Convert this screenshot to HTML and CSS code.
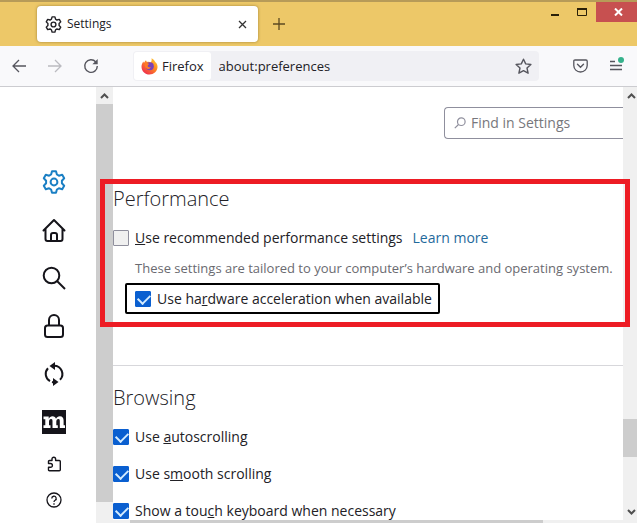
FILE: index.html
```html
<!DOCTYPE html>
<html lang="en">
<head>
    <meta charset="UTF-8">
    <meta name="viewport" content="width=device-width, initial-scale=1.0">
    <title>Settings</title>
    <link rel="stylesheet" href="styles.css">
</head>
<body>
    <svg class="defs" width="0" height="0" aria-hidden="true">
        <symbol id="gear" viewBox="0 0 24 24">
            <path d="M10 1.2h4l.9 3.3 2 1.2 3.3-.9 2 3.5-2.3 2.4v2.6l2.3 2.4-2 3.5-3.3-.9-2 1.2-.9 3.3h-4l-.9-3.3-2-1.2-3.3.9-2-3.5 2.3-2.4v-2.6L1.800 8.300l2-3.500 3.300.9 2-1.200z" fill="none" stroke="currentColor" stroke-width="2" stroke-linejoin="round"/>
            <circle cx="12" cy="12" r="3.400" fill="none" stroke="currentColor" stroke-width="2"/>
        </symbol>
    </svg>

    <div class="window">
        <header class="titlebar">
            <div class="tab">
                <svg class="tab-icon" width="17" height="17"><use href="#gear"/></svg>
                <span class="tab-title">Settings</span>
                <button class="icon-btn tab-close" aria-label="Close tab">
                    <svg width="9" height="9" viewBox="0 0 9 9"><path d="M1 1l7 7M8 1L1 8" stroke="#333" stroke-width="1.300"/></svg>
                </button>
            </div>
            <button class="icon-btn new-tab" aria-label="New tab">
                <svg width="12" height="12" viewBox="0 0 12 12"><path d="M6 0v12M0 6h12" stroke="#5c4a20" stroke-width="1.300"/></svg>
            </button>
            <div class="controls">
                <button class="icon-btn control" aria-label="Minimize">
                    <svg width="10" height="10" viewBox="0 0 10 10"><path d="M1 7h8v2H1z" fill="#2a2008"/></svg>
                </button>
                <button class="icon-btn control" aria-label="Maximize">
                    <svg width="10" height="10" viewBox="0 0 10 10"><path d="M.500 1.500h9v7h-9z" fill="none" stroke="#2a2008"/><path d="M0 1h10v2H0z" fill="#2a2008"/></svg>
                </button>
                <button class="icon-btn control control-close" aria-label="Close">
                    <svg width="9" height="8" viewBox="0 0 9 8"><path d="M1 .500l7 7M8 .500l-7 7" stroke="#fff" stroke-width="2"/></svg>
                </button>
            </div>
        </header>

        <div class="toolbar">
            <div class="history">
                <button class="icon-btn nav-btn" aria-label="Back">
                    <svg width="14" height="14" viewBox="0 0 14 14"><path d="M14 7H1M7 1L1 7l6 6" fill="none" stroke="#56565e" stroke-width="1.300"/></svg>
                </button>
                <button class="icon-btn nav-btn" aria-label="Forward" disabled>
                    <svg width="14" height="14" viewBox="0 0 14 14"><path d="M0 7h13M7 1l6 6-6 6" fill="none" stroke="#bbbbc0" stroke-width="1.300"/></svg>
                </button>
                <button class="icon-btn nav-btn" aria-label="Reload">
                    <svg width="16" height="16" viewBox="0 0 16 16"><path d="M12.800 4A6.300 6.300 0 1 0 14.300 8" fill="none" stroke="#56565e" stroke-width="1.400"/><path d="M14.700 1v5.300H9.400z" fill="#56565e"/></svg>
                </button>
            </div>
            <div class="urlbar">
                <button class="identity">
                    <svg width="17" height="17" viewBox="0 0 17 17">
                        <defs>
                            <linearGradient id="flame" x1="1" y1="0" x2="0.200" y2="1">
                                <stop offset="0" stop-color="#ffd83c"/>
                                <stop offset="0.450" stop-color="#ff8a20"/>
                                <stop offset="1" stop-color="#ee2850"/>
                            </linearGradient>
                        </defs>
                        <path d="M10.500.300c2 1 3.200 2.300 3.700 3.800 1.700 1.300 2.600 3.300 2.300 5.500-.4 4-3.800 7-8 7-4.500 0-8-3.400-8-7.800 0-2.200.8-4 2-5.400l.4 1.500C3.700 3.600 4.400 2.700 5 2.200c.1.700.5 1.300 1 1.700 1.200-.4 2.800-.2 3.800.5.900-1.200 1-2.700.700-4.100z" fill="url(#flame)"/>
                        <circle cx="8.800" cy="8.200" r="4" fill="#7b42b8"/>
                        <path d="M3.700 5.500c2-.8 3.400-.5 4.300.4-.2.900-1.400 1.100-1.400 2 .5 1.300 2 1.700 3.400 1-.8 2-3 2.700-4.700 1.400C4 9.300 3.400 7.500 3.700 5.500z" fill="#ff7a25"/>
                    </svg>
                    <span>Firefox</span>
                </button>
                <input class="url" type="text" value="about:preferences" aria-label="Address">
                <button class="icon-btn star" aria-label="Bookmark this page">
                    <svg width="17" height="17" viewBox="0 0 17 17"><path d="M8.500 1.200l2.200 4.700 5.200.6-3.900 3.500 1.100 5.200-4.600-2.600-4.600 2.600L5 10 1.100 6.500l5.200-.6z" fill="none" stroke="#56565e" stroke-width="1.400" stroke-linejoin="round"/></svg>
                </button>
            </div>
            <div class="actions">
                <button class="icon-btn action" aria-label="Save to Pocket">
                    <svg width="15" height="14" viewBox="0 0 15 14"><path d="M2 1h11q1.200 0 1.200 1.200V6.500a6.700 6.500 0 0 1-13.400 0V2.200Q.8 1 2 1z" fill="none" stroke="#56565e" stroke-width="1.300"/><path d="M4.500 5.300l3 2.900 3-2.900" fill="none" stroke="#56565e" stroke-width="1.400" stroke-linecap="round"/></svg>
                </button>
                <button class="icon-btn action" aria-label="Open application menu">
                    <svg width="16" height="18" viewBox="0 0 16 18"><path d="M2 4.500h5M2 8.500h12M2 12.500h12" stroke="#56565e" stroke-width="1.300"/><circle cx="13" cy="3" r="3" fill="#36b28c"/></svg>
                </button>
            </div>
        </div>

        <div class="content">
            <nav class="sidebar">
                <a class="category selected" href="#general" aria-label="General">
                    <svg width="24" height="24"><use href="#gear"/></svg>
                </a>
                <a class="category" href="#home" aria-label="Home">
                    <svg width="24" height="24" viewBox="0 0 24 24" fill="none" stroke="currentColor" stroke-width="2" stroke-linejoin="round" stroke-linecap="round"><path d="M1.500 12.500L12 2l10.500 10.500M3.500 11v10q0 2 2 2h13q2 0 2-2V11"/><path d="M9 23v-6q0-2 2-2h2q2 0 2 2v6"/></svg>
                </a>
                <a class="category" href="#search" aria-label="Search">
                    <svg width="24" height="24" viewBox="0 0 24 24" fill="none" stroke="currentColor" stroke-width="2"><circle cx="9.500" cy="9.500" r="7.800"/><path d="M15 15l8 8"/></svg>
                </a>
                <a class="category" href="#privacy" aria-label="Privacy &amp; Security">
                    <svg width="24" height="24" viewBox="0 0 24 24" fill="none" stroke="currentColor" stroke-width="2"><rect x="3" y="11.500" width="18" height="11.500" rx="2.500"/><path d="M7 11.500V6a5 5 0 0 1 10 0v5.500"/></svg>
                </a>
                <a class="category" href="#sync" aria-label="Sync">
                    <svg width="24" height="24" viewBox="0 0 24 24" fill="none" stroke="currentColor" stroke-width="2"><path d="M8 19.200A8.300 8.300 0 0 1 6 6.200M12 3.700A8.300 8.300 0 0 1 18 17.800M12 20.300a8.300 8.300 0 0 1-2-.2"/><path d="M13 0v8L7.500 4zM11 16v8l5.500-4z" fill="currentColor" stroke="none"/></svg>
                </a>
                <a class="category" href="#more" aria-label="More from Mozilla">
                    <svg width="24" height="24" viewBox="0 0 24 24"><path d="M0 0h24v24H0z" fill="#15141a"/><path d="M1.500 6.500h5.200v2.200C7.500 7.200 8.700 6.200 10.500 6.200c1.900 0 3 .9 3.500 2.500.8-1.600 2-2.500 3.800-2.500 2.700 0 3.800 1.700 3.800 4.300v4.700H23V18h-5.200v-6.700c0-1.500-.3-2.300-1.400-2.300-1.400 0-2.100 1.300-2.100 3v3.200h1.500V18H10.500v-6.700c0-1.500-.3-2.300-1.400-2.300C7.700 9 7 10.300 7 12v3.200h1.500V18h-7v-2.800h1.800V9.300H1.500z" fill="#fff"/></svg>
                </a>
                <a class="category small" href="#addons" aria-label="Extensions &amp; Themes">
                    <svg width="16" height="16" viewBox="0 0 16 16" fill="none" stroke="currentColor" stroke-width="1.400" stroke-linejoin="round"><path d="M2.500 7.500V5.500q0-1 1-1H6V3a1.800 1.800 0 0 1 3.600 0v1.500h3.700q1 0 1 1v8.300q0 1-1 1H3.500q-1 0-1-1v-2.500h2a1.900 1.900 0 0 0 0-3.800z"/></svg>
                </a>
                <a class="category small" href="#support" aria-label="Firefox Support">
                    <svg width="16" height="16" viewBox="0 0 16 16" fill="none" stroke="currentColor" stroke-width="1.300"><circle cx="8" cy="8" r="7"/><path d="M5.800 6.500a2.200 2.200 0 1 1 3.300 1.800q-1.100.600-1.100 1.700M8 11.200v1.500"/></svg>
                </a>
            </nav>

            <div class="scroll scroll-left">
                <span class="arrow"><svg width="9" height="6" viewBox="0 0 9 6"><path d="M1 5l3.500-3.500L8 5" fill="none" stroke="#505050" stroke-width="2"/></svg></span>
                <span class="thumb"></span>
            </div>

            <div class="pane">
                <main class="main">
                    <div class="search">
                        <svg width="12" height="12" viewBox="0 0 12 12" fill="none" stroke="#8f8f9d" stroke-width="1.200"><circle cx="7.300" cy="4.700" r="3.800"/><path d="M4.500 7.500L.8 11.200"/></svg>
                        <input type="search" placeholder="Find in Settings" aria-label="Find in Settings">
                    </div>

                    <section class="group performance">
                        <h2>Performance</h2>
                        <div class="row">
                            <input type="checkbox" id="recommended">
                            <label for="recommended"><u>U</u>se recommended performance settings</label>
                            <a class="learn" href="#learn">Learn more</a>
                        </div>
                        <p class="description">These settings are tailored to your computer’s hardware and operating system.</p>
                        <div class="row focused">
                            <input type="checkbox" id="hardware" checked>
                            <label for="hardware">Use ha<u>r</u>dware acceleration when available</label>
                        </div>
                    </section>

                    <section class="group browsing">
                        <h2>Browsing</h2>
                        <div class="row">
                            <input type="checkbox" id="autoscroll" checked>
                            <label for="autoscroll">Use <u>a</u>utoscrolling</label>
                        </div>
                        <div class="row">
                            <input type="checkbox" id="smooth" checked>
                            <label for="smooth">Use s<u>m</u>ooth scrolling</label>
                        </div>
                        <div class="row">
                            <input type="checkbox" id="touch" checked>
                            <label for="touch">Show a tou<u>c</u>h keyboard when necessary</label>
                        </div>
                    </section>
                </main>
                <div class="scroll-bottom"><span class="thumb"></span></div>
            </div>

            <div class="scroll scroll-right">
                <span class="arrow"><svg width="9" height="6" viewBox="0 0 9 6"><path d="M1 5l3.500-3.500L8 5" fill="none" stroke="#505050" stroke-width="2"/></svg></span>
                <span class="thumb"></span>
                <span class="arrow"><svg width="9" height="6" viewBox="0 0 9 6"><path d="M1 1l3.500 3.500L8 1" fill="none" stroke="#505050" stroke-width="2"/></svg></span>
            </div>

            <div class="highlight"></div>
        </div>
    </div>
</body>
</html>
```
FILE: styles.css
```css
* { box-sizing: border-box; }
body {
    margin: 0;
    font-family: "Open Sans", "Noto Sans", sans-serif;
    font-size: 14px; line-height: 20px;
    color: #222126; background: #fff;
}
button, input { font: inherit; color: inherit; }
svg { display: block; flex: none; }
.defs { position: absolute; }
.window { display: flex; flex-direction: column; height: 100vh; overflow: hidden; }
.icon-btn {
    display: flex; align-items: center; justify-content: center;
    padding: 0; border: none; background: none;
}

/* Title bar */
.titlebar {
    display: flex; flex: none; height: 46px;
    padding-left: 37px;
    background: #edc868; border-top: 2px solid #b79b58;
}
.tab {
    display: flex; align-items: center;
    width: 221px; height: 36px; margin-top: 4px; padding: 0 8px;
    background: #fff; border-radius: 4px;
    box-shadow: 0 0 3px rgba(80,60,0,0.5);
}
.tab-title { flex: 1; margin-left: 5px; font-size: 12px; }
.tab-close { width: 16px; height: 16px; }
.new-tab { width: 42px; height: 44px; }
.controls { display: flex; margin-left: auto; }
.control { width: 26px; height: 20px; }
.control:nth-child(2) { width: 28px; }
.control-close { width: 41px; padding-left: 4px; background: #c75050; }

/* Toolbar */
.toolbar {
    display: flex; flex: none; align-items: center; height: 41px;
    padding: 0 3px 0 1px;
    background: #f9f9fb; border-bottom: 1px solid #ccccd0;
    font-size: 13px;
}
.history { display: flex; width: 132px; }
.nav-btn { width: 36px; height: 32px; }
.urlbar {
    display: flex; flex: 1; align-items: center; height: 30px;
    padding: 1px; background: #f0f0f4; border-radius: 4px;
}
.identity {
    display: flex; align-items: center; gap: 4px;
    height: 28px; padding: 0 7px;
    border: none; border-radius: 3px; background: #fff;
}
.url {
    flex: 1; min-width: 0; padding: 0 8px;
    border: none; outline: none; background: none;
}
.star { width: 30px; height: 28px; }
.actions { display: flex; padding-left: 23px; }
.action { width: 36px; height: 32px; }

/* Page */
.content { display: flex; flex: 1; min-height: 0; position: relative; }
.sidebar { flex: none; width: 96px; padding: 71px 0 0 12px; }
.category {
    display: flex; align-items: center; justify-content: center;
    height: 48px; color: #15141a;
}
.category.selected { color: #1a7fc4; }
.category.small { height: 36px; }

.scroll { display: flex; flex: none; flex-direction: column; background: #f0f0f0; }
.scroll .arrow { display: flex; align-items: center; justify-content: center; height: 17px; }
.thumb { background: #cdcdcd; }
.scroll-left { width: 17px; }
.scroll-left .thumb { flex: 1; margin-bottom: 21px; }
.scroll-right { width: 14px; padding-bottom: 3px; }
.scroll-right .arrow { padding-left: 2px; }
.scroll-right .thumb { height: 38px; margin: auto 0 46px; }
.scroll-bottom { display: flex; height: 3px; padding: 0 80px 0 17px; background: #f0f0f0; }
.scroll-bottom .thumb { flex: 1; }

.pane { display: flex; flex: 1; flex-direction: column; min-width: 0; }
.main { flex: 1; min-height: 0; padding-top: 20px; overflow: hidden; }
.search {
    display: flex; align-items: center; gap: 5px;
    width: 179px; height: 32px; margin-left: auto; padding-left: 9px;
    border: 1px solid #8f8f9d; border-right: none;
    border-radius: 4px 0 0 4px;
}
.search input {
    flex: 1; min-width: 0; padding: 0;
    border: none; outline: none; background: none;
}
.search input::placeholder { color: #77777c; opacity: 1; }

h2 { margin: 0 0 16px; font-size: 20px; font-weight: 300; line-height: 28px; }
.performance { padding: 46px 0 51px; border-bottom: 1px solid #d7d7db; }
.browsing { padding-top: 18px; }
.row { display: flex; align-items: center; line-height: 18px; white-space: nowrap; }
.browsing .row + .row { margin-top: 19px; }
.row input {
    appearance: none; flex: none;
    width: 16px; height: 16px; margin: 0 6px 0 0;
    border: 1px solid #8f8f9d; border-radius: 1px; background: #f0f0f0;
}
.row input:checked { border-color: #0a5fd0; background: #0a5fd0; }
.row input:checked::before {
    content: ""; display: block;
    width: 10px; height: 6px; margin: 2px;
    border: solid #d4ecff; border-width: 0 0 2px 2px;
    transform: rotate(-45deg);
}
.learn { margin-left: 10px; color: #1f6a9c; text-decoration: none; }
.description { margin: 11px 0 5px 22px; font-size: 13px; color: #6a6a70; white-space: nowrap; }
.focused {
    width: max-content; height: 31px; margin-left: 12px; padding: 0 6px 0 8px;
    border: 2px solid #000; border-radius: 2px;
}

/* Red frame round the performance group, over both scrollbars */
.highlight {
    position: absolute; top: 92px; left: 100px; right: 7px; height: 148px;
    border: 5px solid #ed1c24; pointer-events: none;
}
```
